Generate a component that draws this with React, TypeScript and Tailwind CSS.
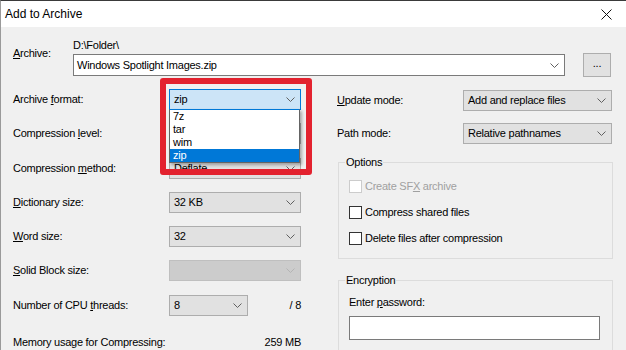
import clsx from "clsx";

function Chevron({ disabled = false }: { disabled?: boolean }) {
  return (
    <svg width="9" height="5" viewBox="0 0 9 5" className="shrink-0">
      <path
        d="M0.5 0.5 L4.5 4.5 L8.5 0.5"
        fill="none"
        stroke={disabled ? "#b4b4b4" : "#606060"}
        strokeWidth="1"
      />
    </svg>
  );
}

type ComboVariant = "normal" | "focus" | "disabled";

function Combo({
  value,
  width = "w-[132px]",
  variant = "normal",
}: {
  value?: string;
  width?: string;
  variant?: ComboVariant;
}) {
  return (
    <div
      className={clsx(
        "flex h-[21px] items-center justify-between border pl-[4px] pr-[5px]",
        width,
        variant === "normal" && "border-[#adadad] bg-[#e1e1e1]",
        variant === "focus" && "border-[#0078d7] bg-[#cce4f7]",
        variant === "disabled" && "border-[#bfbfbf] bg-[#cccccc]"
      )}
    >
      <span>{value}</span>
      <Chevron disabled={variant === "disabled"} />
    </div>
  );
}

function Row({ label, children }: { label: React.ReactNode; children: React.ReactNode }) {
  return (
    <div className="flex h-[21px] items-center">
      <div className="w-[156px] shrink-0">{label}</div>
      {children}
    </div>
  );
}

function Checkbox({ label, disabled = false }: { label: React.ReactNode; disabled?: boolean }) {
  return (
    <div className="flex h-[13px] items-center">
      <div
        className={clsx(
          "h-[13px] w-[13px] border bg-white",
          disabled ? "border-[#cccccc]" : "border-[#333333]"
        )}
      />
      <span className={clsx("ml-[3px]", disabled && "text-[#a0a0a0]")}>{label}</span>
    </div>
  );
}

export default function App() {
  return (
    <div className="relative h-[350px] w-[626px] overflow-hidden border-l border-t border-l-[#9a9a9a] border-t-[#3a3a3a] bg-[#f0f0f0] font-['Liberation_Sans',Arial,sans-serif] text-[11px] leading-[15px] tracking-[-0.25px] text-black">
      {/* title bar */}
      <div className="flex h-[26px] items-center justify-between bg-white pl-[4px] pr-[14px] text-[12px] tracking-normal">
        <span>Add to Archive</span>
        <svg width="11" height="11" viewBox="0 0 11 11">
          <path d="M0.5 0.5 L10.5 10.5 M10.5 0.5 L0.5 10.5" stroke="#111" strokeWidth="1" fill="none" />
        </svg>
      </div>

      <div className="pl-[12px] pt-[11px]">
        {/* archive name */}
        <div className="flex">
          <div className="w-[60px] pt-[8px]">
            <u>A</u>rchive:
          </div>
          <div className="flex flex-col">
            <div className="h-[15px]">{"D:\\Folder\\"}</div>
            <div className="flex items-center">
              <div className="flex h-[22px] w-[492px] items-center justify-between border border-[#7a7a7a] bg-white pl-[3px] pr-[5px]">
                <span>Windows Spotlight Images.zip</span>
                <Chevron />
              </div>
              <div className="ml-[18px] flex h-[24px] w-[28px] items-center justify-center border border-[#adadad] bg-[#e1e1e1] pb-[3px]">
                ...
              </div>
            </div>
          </div>
        </div>

        <div className="mt-[12px] flex">
          {/* left column */}
          <div className="flex w-[288px] flex-col gap-[13.3px]">
            <Row label={<>Archive <u>f</u>ormat:</>}>
              <Combo value="zip" variant="focus" />
            </Row>
            <Row label={<>Compression <u>l</u>evel:</>}>
              {/* covered by the open list */}
              <Combo />
            </Row>
            <Row label={<>Compression <u>m</u>ethod:</>}>
              <Combo value="Deflate" />
            </Row>
            <Row label={<><u>D</u>ictionary size:</>}>
              <Combo value="32 KB" />
            </Row>
            <Row label={<><u>W</u>ord size:</>}>
              <Combo value="32" />
            </Row>
            <Row label={<><u>S</u>olid Block size:</>}>
              <Combo variant="disabled" />
            </Row>
            <Row label={<>Number of CPU <u>t</u>hreads:</>}>
              <Combo value="8" width="w-[79px]" />
              <span className="flex-1 text-right">/ 8</span>
            </Row>
            <div className="mt-[6px] flex h-[15px] items-center justify-between">
              <span>Memory usage for Compressing:</span>
              <span>259 MB</span>
            </div>
          </div>

          {/* right column */}
          <div className="ml-[36px] flex w-[276px] flex-col pt-[1px]">
            <div className="flex h-[21px] items-center">
              <div className="w-[126px]">
                <u>U</u>pdate mode:
              </div>
              <Combo value="Add and replace files" width="w-[149px]" />
            </div>
            <div className="mt-[12px] flex h-[21px] items-center">
              <div className="w-[126px]">Path mode:</div>
              <Combo value="Relative pathnames" width="w-[149px]" />
            </div>

            <fieldset className="ml-[1px] mt-[11px] w-[275px] border border-[#dcdcdc]">
              <legend className="ml-[6px] px-[1px]">Options</legend>
              <div className="flex flex-col gap-[13px] pb-[13px] pl-[10px] pt-[10px]">
                <Checkbox disabled label={<>Create SF<u>X</u> archive</>} />
                <Checkbox label="Compress shared files" />
                <Checkbox label="Delete files after compression" />
              </div>
            </fieldset>

            <fieldset className="ml-[1px] mt-[14px] w-[275px] border border-[#dcdcdc]">
              <legend className="ml-[6px] px-[1px]">Encryption</legend>
              <div className="pb-[20px] pl-[10px] pt-[7px]">
                <div>
                  Enter <u>p</u>assword:
                </div>
                <div className="mt-[6px] h-[24px] w-[251px] border border-[#7a7a7a] bg-white" />
              </div>
            </fieldset>
          </div>
        </div>
      </div>

      {/* open dropdown list of the archive format combo */}
      <div className="absolute left-[168px] top-[108px] w-[131px] border border-[#646464] border-t-[#0078d7] bg-white shadow-[2px_2px_3px_rgba(0,0,0,0.3)]">
        {["7z", "tar", "wim", "zip"].map((item) => (
          <div
            key={item}
            className={clsx(
              "h-[13px] pl-[3px] leading-[13px]",
              item === "zip" && "bg-[#0078d7] text-white"
            )}
          >
            {item}
          </div>
        ))}
      </div>

      {/* red highlight frame */}
      <div className="pointer-events-none absolute left-[159px] top-[77px] h-[97px] w-[152px] rounded-[3px] border-[6px] border-[#e3222f]" />
    </div>
  );
}
